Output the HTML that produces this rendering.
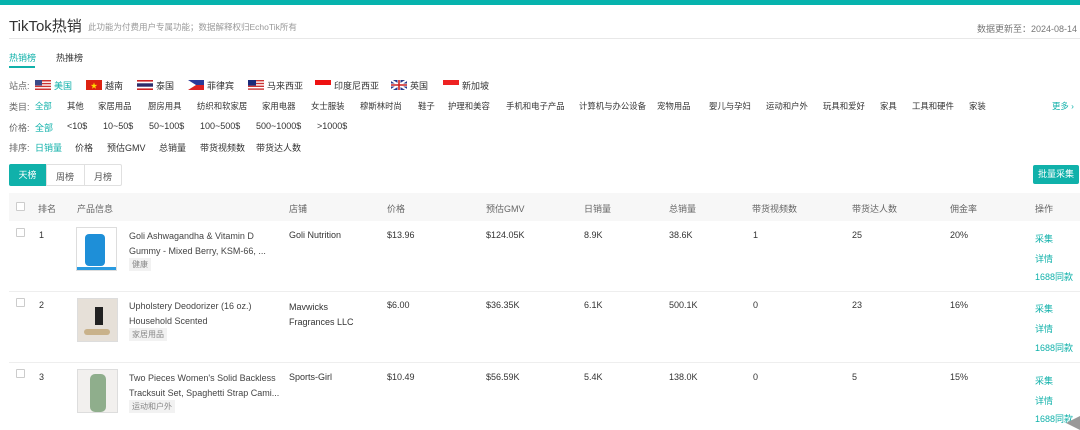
<!DOCTYPE html>
<html><head><meta charset="utf-8"><style>
*{margin:0;padding:0;box-sizing:border-box}
body{width:1080px;height:430px;overflow:hidden;background:#fff;font-family:"Liberation Sans","Noto Sans CJK SC",sans-serif;color:#333;font-size:9px;position:relative}
.a{position:absolute;white-space:nowrap}
.c{font-size:8.4px}
.t{color:#10b1aa}
.g{color:#666}
.flag{position:absolute;width:16px;height:10px}
.cb{position:absolute;width:9px;height:9px;border:1px solid #ccc;background:#fff;border-radius:1px}
.tag{position:absolute;background:#f2f2f2;color:#888;padding:1px 3px;font-size:8px}
.img{position:absolute;width:41px;height:44px;border:1px solid #ddd}
</style></head><body>
<div class="a" style="left:0;top:0;width:1080px;height:5px;background:#06b3ad"></div>
<div class="a" style="left:9px;top:15px;font-size:15px;color:#333">TikTok热销</div>
<div class="a" style="left:88px;top:21px;font-size:8.5px;color:#999">此功能为付费用户专属功能；数据解释权归EchoTik所有</div>
<div class="a" style="right:3px;top:22px;font-size:9px;color:#777">数据更新至：2024-08-14</div>
<div class="a" style="left:9px;top:38px;width:1071px;height:1px;background:#e8e8e8"></div>
<div class="a t" style="left:9px;top:51px">热销榜</div>
<div class="a" style="left:56px;top:51px">热推榜</div>
<div class="a" style="left:9px;top:66px;width:26px;height:2px;background:#10b1aa"></div>

<div class="a g" style="left:9px;top:79px">站点:</div>
<svg class="flag" style="left:35px;top:80px" viewBox="0 0 16 10"><rect width="16" height="10" fill="#c33"/><rect y="1.5" width="16" height="1.4" fill="#fff"/><rect y="4.3" width="16" height="1.4" fill="#fff"/><rect y="7.1" width="16" height="1.4" fill="#fff"/><rect width="7" height="5.5" fill="#3a4a8a"/></svg>
<div class="a t" style="left:54px;top:79px">美国</div>
<svg class="flag" style="left:86px;top:80px" viewBox="0 0 16 10"><rect width="16" height="10" fill="#d21"/><text x="8" y="8" font-size="7" fill="#fd0" text-anchor="middle">★</text></svg>
<div class="a" style="left:105px;top:79px">越南</div>
<svg class="flag" style="left:137px;top:80px" viewBox="0 0 16 10"><rect width="16" height="10" fill="#c22"/><rect y="1.6" width="16" height="6.8" fill="#fff"/><rect y="3.3" width="16" height="3.4" fill="#2c2c6a"/></svg>
<div class="a" style="left:156px;top:79px">泰国</div>
<svg class="flag" style="left:188px;top:80px" viewBox="0 0 16 10"><rect width="16" height="5" fill="#2a3a9a"/><rect y="5" width="16" height="5" fill="#d22"/><polygon points="0,0 8,5 0,10" fill="#fff"/></svg>
<div class="a" style="left:207px;top:79px">菲律宾</div>
<svg class="flag" style="left:248px;top:80px" viewBox="0 0 16 10"><rect width="16" height="10" fill="#fff"/><rect y="0" width="16" height="1.4" fill="#c33"/><rect y="2.8" width="16" height="1.4" fill="#c33"/><rect y="5.6" width="16" height="1.4" fill="#c33"/><rect y="8.4" width="16" height="1.4" fill="#c33"/><rect width="8" height="5.6" fill="#1a2a7a"/></svg>
<div class="a" style="left:267px;top:79px">马来西亚</div>
<svg class="flag" style="left:315px;top:80px" viewBox="0 0 16 10"><rect width="16" height="5" fill="#e11"/><rect y="5" width="16" height="5" fill="#fff"/></svg>
<div class="a" style="left:334px;top:79px">印度尼西亚</div>
<svg class="flag" style="left:391px;top:80px" viewBox="0 0 16 10"><rect width="16" height="10" fill="#2a3a8a"/><path d="M0 0L16 10M16 0L0 10" stroke="#fff" stroke-width="2"/><path d="M8 0V10M0 5H16" stroke="#fff" stroke-width="3"/><path d="M8 0V10M0 5H16" stroke="#c22" stroke-width="1.6"/></svg>
<div class="a" style="left:410px;top:79px">英国</div>
<svg class="flag" style="left:443px;top:80px" viewBox="0 0 16 10"><rect width="16" height="5" fill="#e22"/><rect y="5" width="16" height="5" fill="#fff"/></svg>
<div class="a" style="left:462px;top:79px">新加坡</div>

<div class="a g" style="left:9px;top:100px">类目:</div>
<div class="a t c" style="left:35px;top:100px">全部</div>
<div class="a c" style="left:67px;top:100px">其他</div>
<div class="a c" style="left:98px;top:100px">家居用品</div>
<div class="a c" style="left:148px;top:100px">厨房用具</div>
<div class="a c" style="left:197px;top:100px">纺织和软家居</div>
<div class="a c" style="left:262px;top:100px">家用电器</div>
<div class="a c" style="left:311px;top:100px">女士服装</div>
<div class="a c" style="left:360px;top:100px">穆斯林时尚</div>
<div class="a c" style="left:418px;top:100px">鞋子</div>
<div class="a c" style="left:448px;top:100px">护理和美容</div>
<div class="a c" style="left:506px;top:100px">手机和电子产品</div>
<div class="a c" style="left:579px;top:100px">计算机与办公设备</div>
<div class="a c" style="left:657px;top:100px">宠物用品</div>
<div class="a c" style="left:709px;top:100px">婴儿与孕妇</div>
<div class="a c" style="left:766px;top:100px">运动和户外</div>
<div class="a c" style="left:823px;top:100px">玩具和爱好</div>
<div class="a c" style="left:880px;top:100px">家具</div>
<div class="a c" style="left:912px;top:100px">工具和硬件</div>
<div class="a c" style="left:969px;top:100px">家装</div>
<div class="a t c" style="left:1052px;top:100px">更多 ›</div>

<div class="a g" style="left:9px;top:121px">价格:</div>
<div class="a t" style="left:35px;top:121px">全部</div>
<div class="a" style="left:67px;top:121px">&lt;10$</div>
<div class="a" style="left:103px;top:121px">10~50$</div>
<div class="a" style="left:149px;top:121px">50~100$</div>
<div class="a" style="left:200px;top:121px">100~500$</div>
<div class="a" style="left:256px;top:121px">500~1000$</div>
<div class="a" style="left:317px;top:121px">&gt;1000$</div>

<div class="a g" style="left:9px;top:141px">排序:</div>
<div class="a t" style="left:35px;top:141px">日销量</div>
<div class="a" style="left:75px;top:141px">价格</div>
<div class="a" style="left:107px;top:141px">预估GMV</div>
<div class="a" style="left:159px;top:141px">总销量</div>
<div class="a" style="left:200px;top:141px">带货视频数</div>
<div class="a" style="left:256px;top:141px">带货达人数</div>

<div class="a" style="left:9px;top:164px;width:113px;height:22px;border:1px solid #e0e0e0;border-radius:2px"></div>
<div class="a" style="left:9px;top:164px;width:37px;height:22px;background:#10b1aa;color:#fff;text-align:center;line-height:22px;border-radius:2px 0 0 2px">天榜</div>
<div class="a" style="left:46px;top:164px;width:1px;height:22px;background:#e0e0e0"></div>
<div class="a" style="left:56px;top:170px;color:#555">周榜</div>
<div class="a" style="left:84px;top:164px;width:1px;height:22px;background:#e0e0e0"></div>
<div class="a" style="left:94px;top:170px;color:#555">月榜</div>
<div class="a" style="left:1033px;top:165px;width:46px;height:19px;background:#10b1aa;color:#fff;text-align:center;line-height:19px;border-radius:2px">批量采集</div>

<div class="a" style="left:9px;top:193px;width:1071px;height:28px;background:#f7f7f7"></div>
<div class="cb" style="left:16px;top:202px"></div>
<div class="a g" style="left:38px;top:202px">排名</div>
<div class="a g" style="left:77px;top:202px">产品信息</div>
<div class="a g" style="left:289px;top:202px">店铺</div>
<div class="a g" style="left:387px;top:202px">价格</div>
<div class="a g" style="left:486px;top:202px">预估GMV</div>
<div class="a g" style="left:584px;top:202px">日销量</div>
<div class="a g" style="left:669px;top:202px">总销量</div>
<div class="a g" style="left:752px;top:202px">带货视频数</div>
<div class="a g" style="left:852px;top:202px">带货达人数</div>
<div class="a g" style="left:950px;top:202px">佣金率</div>
<div class="a g" style="left:1035px;top:202px">操作</div>

<div class="a" style="left:9px;top:291px;width:1071px;height:1px;background:#eee"></div>
<div class="a" style="left:9px;top:362px;width:1071px;height:1px;background:#eee"></div>

<!-- row 1 -->
<div class="cb" style="left:16px;top:228px"></div>
<div class="a" style="left:39px;top:230px">1</div>
<div class="img" style="left:76px;top:227px;background:#fff"><div style="position:absolute;left:8px;top:6px;width:20px;height:32px;background:#1e8fd8;border-radius:4px"></div><div style="position:absolute;left:0;bottom:0;width:39px;height:3px;background:#2a9be0"></div></div>
<div class="a" style="left:129px;top:229px;line-height:15px;font-size:9px;color:#444">Goli Ashwagandha &amp; Vitamin D<br>Gummy - Mixed Berry, KSM-66, ...</div>
<div class="tag" style="left:129px;top:258px">健康</div>
<div class="a" style="left:289px;top:230px">Goli Nutrition</div>
<div class="a" style="left:387px;top:230px">$13.96</div>
<div class="a" style="left:486px;top:230px">$124.05K</div>
<div class="a" style="left:584px;top:230px">8.9K</div>
<div class="a" style="left:669px;top:230px">38.6K</div>
<div class="a" style="left:753px;top:230px">1</div>
<div class="a" style="left:852px;top:230px">25</div>
<div class="a" style="left:950px;top:230px">20%</div>
<div class="a t" style="left:1035px;top:232px">采集</div>
<div class="a t" style="left:1035px;top:252px">详情</div>
<div class="a t" style="left:1035px;top:270px">1688同款</div>

<!-- row 2 -->
<div class="cb" style="left:16px;top:298px"></div>
<div class="a" style="left:39px;top:300px">2</div>
<div class="img" style="left:77px;top:298px;background:#e6e0d8"><div style="position:absolute;left:17px;top:8px;width:8px;height:18px;background:#222"></div><div style="position:absolute;left:6px;top:30px;width:26px;height:6px;background:#c9b28a;border-radius:3px"></div></div>
<div class="a" style="left:129px;top:299px;line-height:15px;color:#444">Upholstery Deodorizer (16 oz.)<br>Household Scented</div>
<div class="tag" style="left:129px;top:328px">家居用品</div>
<div class="a" style="left:289px;top:300px;line-height:15px">Mavwicks<br>Fragrances LLC</div>
<div class="a" style="left:387px;top:300px">$6.00</div>
<div class="a" style="left:486px;top:300px">$36.35K</div>
<div class="a" style="left:584px;top:300px">6.1K</div>
<div class="a" style="left:669px;top:300px">500.1K</div>
<div class="a" style="left:753px;top:300px">0</div>
<div class="a" style="left:852px;top:300px">23</div>
<div class="a" style="left:950px;top:300px">16%</div>
<div class="a t" style="left:1035px;top:302px">采集</div>
<div class="a t" style="left:1035px;top:322px">详情</div>
<div class="a t" style="left:1035px;top:341px">1688同款</div>

<!-- row 3 -->
<div class="cb" style="left:16px;top:369px"></div>
<div class="a" style="left:39px;top:372px">3</div>
<div class="img" style="left:77px;top:369px;background:#f2f0ee"><div style="position:absolute;left:12px;top:4px;width:16px;height:38px;background:#8fae8c;border-radius:5px"></div></div>
<div class="a" style="left:129px;top:371px;line-height:15px;color:#444">Two Pieces Women's Solid Backless<br>Tracksuit Set, Spaghetti Strap Cami...</div>
<div class="tag" style="left:129px;top:400px">运动和户外</div>
<div class="a" style="left:289px;top:372px">Sports-Girl</div>
<div class="a" style="left:387px;top:372px">$10.49</div>
<div class="a" style="left:486px;top:372px">$56.59K</div>
<div class="a" style="left:584px;top:372px">5.4K</div>
<div class="a" style="left:669px;top:372px">138.0K</div>
<div class="a" style="left:753px;top:372px">0</div>
<div class="a" style="left:852px;top:372px">5</div>
<div class="a" style="left:950px;top:372px">15%</div>
<div class="a t" style="left:1035px;top:374px">采集</div>
<div class="a t" style="left:1035px;top:394px">详情</div>
<div class="a t" style="left:1035px;top:412px">1688同款</div>
<div class="a" style="left:1066px;top:416px;width:14px;height:14px;background:#999;clip-path:polygon(100% 0,100% 100%,0 50%)"></div>
</body></html>
